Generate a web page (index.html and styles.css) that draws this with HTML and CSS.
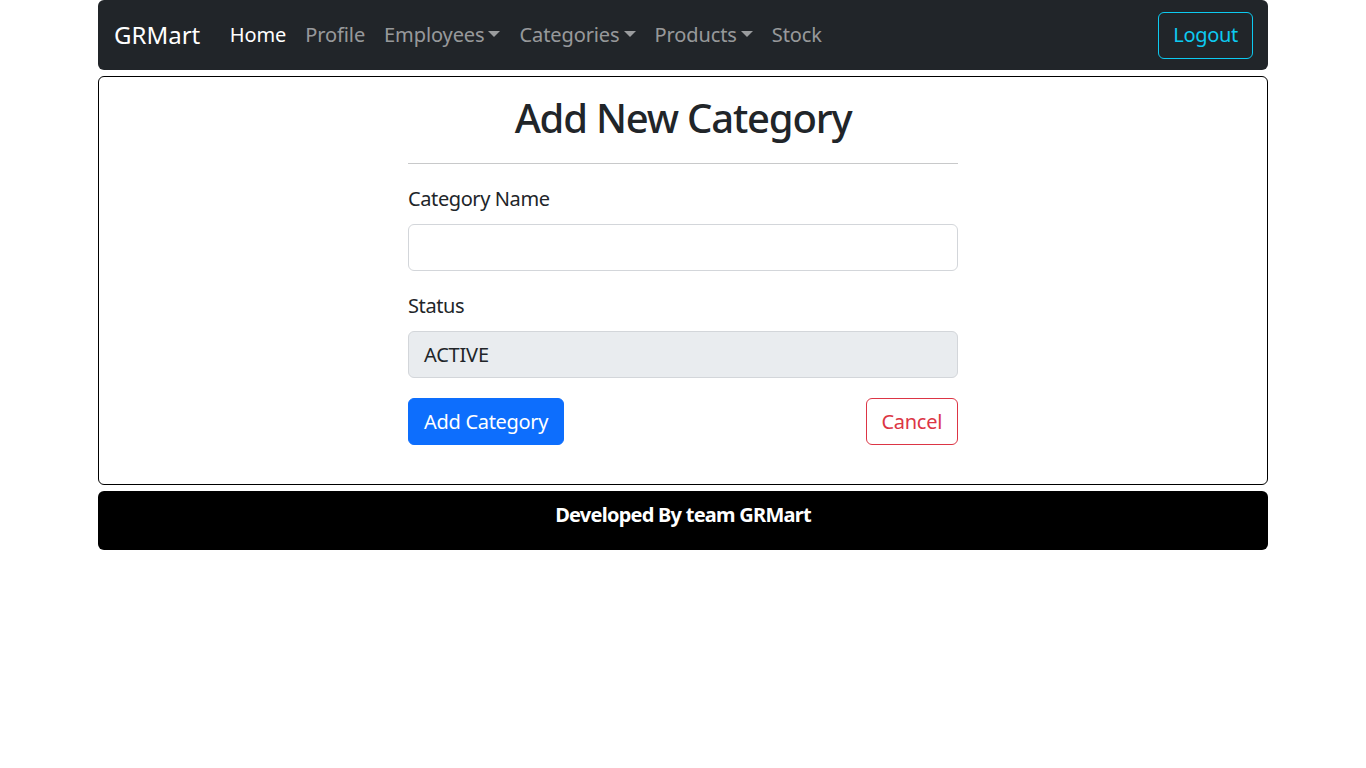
FILE: index.html
```html
<!DOCTYPE html>
<html lang="en">
<head>
<meta charset="utf-8">
<title>GRMart - Add New Category</title>
<link rel="stylesheet" href="styles.css">
</head>
<body>
<div class="container">
  <nav class="navbar">
    <a class="brand" href="#">GRMart</a>
    <ul class="nav">
      <li><a class="nav-link active" href="#">Home</a></li>
      <li><a class="nav-link" href="#">Profile</a></li>
      <li><a class="nav-link toggle" href="#">Employees</a></li>
      <li><a class="nav-link toggle" href="#">Categories</a></li>
      <li><a class="nav-link toggle" href="#">Products</a></li>
      <li><a class="nav-link" href="#">Stock</a></li>
    </ul>
    <button class="btn btn-outline-info" type="button">Logout</button>
  </nav>

  <main class="card">
    <form class="form">
      <h1 class="title">Add New Category</h1>
      <hr class="rule">
      <label class="label" for="catName">Category Name</label>
      <input class="control" id="catName" type="text">
      <label class="label" for="status">Status</label>
      <div class="control disabled" id="status">ACTIVE</div>
      <div class="actions">
        <button class="btn btn-primary" type="button">Add Category</button>
        <button class="btn btn-outline-danger" type="button">Cancel</button>
      </div>
    </form>
  </main>

  <footer class="footer">Developed By team GRMart</footer>
</div>
</body>
</html>
```
FILE: styles.css
```css
* { box-sizing: border-box; }
html, body { margin: 0; padding: 0; background: #fff; }
body {
  font-family: "Noto Sans", "Open Sans", sans-serif;
  font-size: 20px;
  line-height: 1.5;
  color: #212529;
}
.container {
  width: 1170px;
  margin: 0 auto;
  display: flex;
  flex-direction: column;
  gap: 6px;
}
.navbar {
  background: #212529;
  border-radius: 6px;
  height: 70px;
  padding: 0 15px 0 16px;
  display: flex;
  align-items: center;
}
.brand {
  color: #fff;
  text-decoration: none;
  font-size: 24px;
  line-height: 36px;
  margin-right: 20px;
}
.nav {
  list-style: none;
  margin: 0;
  padding: 0;
  display: flex;
  flex: 1;
}
.nav-link {
  display: block;
  padding: 8px 9.5px;
  color: rgba(255, 255, 255, 0.55);
  text-decoration: none;
  line-height: 30px;
  letter-spacing: -0.1px;
}
.nav-link.active { color: #fff; }
.toggle::after {
  content: "";
  display: inline-block;
  margin-left: 4px;
  vertical-align: 5px;
  border-top: 6px solid;
  border-left: 6px solid transparent;
  border-right: 6px solid transparent;
}
.btn {
  font-family: inherit;
  font-size: 20px;
  line-height: 30px;
  padding: 7.5px 15px;
  border-radius: 6px;
  border: 1px solid transparent;
  background: transparent;
  cursor: pointer;
  letter-spacing: -0.3px;
}
.btn-outline-info { color: #0dcaf0; border-color: #0dcaf0; padding: 7.5px 14px; }
.btn-primary { color: #fff; background: #0d6efd; border-color: #0d6efd; }
.btn-outline-danger { color: #dc3545; border-color: #dc3545; background: #fff; }
.card {
  border: 1px solid #000;
  border-radius: 6px;
  padding: 17px 0 39px;
  display: flex;
  justify-content: center;
}
.form {
  width: 550px;
  display: flex;
  flex-direction: column;
}
.title {
  margin: 0 0 21px;
  font-size: 40px;
  font-weight: 500;
  line-height: 48px;
  text-align: center;
  letter-spacing: -1.2px;
}
.rule {
  margin: 0 0 20px;
  border: 0;
  border-top: 1px solid #c8c9ca;
  height: 0;
}
.label {
  display: block;
  line-height: 30px;
  margin-bottom: 10px;
  letter-spacing: -0.4px;
}
.control {
  display: block;
  width: 100%;
  height: 47px;
  font-family: inherit;
  font-size: 20px;
  line-height: 30px;
  padding: 7.5px 16px;
  color: #212529;
  background: #fff;
  border: 1px solid #d3d6da;
  border-radius: 6px;
  margin-bottom: 20px;
}
.control.disabled { background: #e9ecef; padding-left: 15px; letter-spacing: -0.2px; }
.actions {
  display: flex;
  justify-content: space-between;
}
.footer {
  background: #000;
  color: #fff;
  border-radius: 6px;
  text-align: center;
  font-weight: 700;
  font-size: 20px;
  line-height: 30px;
  padding: 9px 0 20px;
  letter-spacing: -0.75px;
}
```
